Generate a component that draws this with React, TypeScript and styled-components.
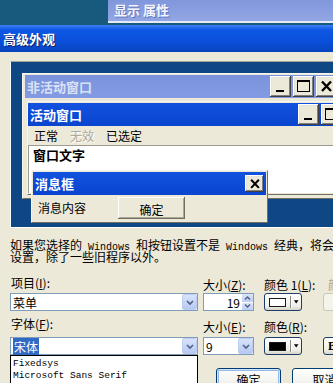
import styled, { createGlobalStyle } from "styled-components";

const CJK = `"Noto Sans CJK SC", "Noto Sans", sans-serif`;
const MONO = `"Liberation Mono", "DejaVu Sans Mono", monospace`;

const GlobalStyle = createGlobalStyle`
  * { box-sizing: border-box; }
  html, body { margin: 0; padding: 0; background: #ece9d8; }
`;

const Screen = styled.div`
  width: 333px;
  height: 383px;
  overflow: hidden;
  background: #ece9d8;
  display: flex;
  flex-direction: column;
  font-family: ${CJK};
  font-size: 12px;
  color: #000;
`;

/* ---------------- window chrome ---------------- */

const TopStrip = styled.div`
  height: 25px;
  flex: none;
  display: flex;
  background: #175a7d;
`;

const PropsTab = styled.div`
  margin-left: 108px;
  flex: 1;
  height: 23px;
  border-bottom: 2px solid #e4eaf8;
  background: linear-gradient(180deg, #8197dc, #93a6e4);
  color: #f4f6fd;
  font-weight: bold;
  font-size: 13px;
  line-height: 20px;
  padding-left: 6px;
  text-shadow: 1px 1px 0 #6276bb;
  white-space: nowrap;
`;

const TitleBar = styled.div`
  height: 27px;
  flex: none;
  background: linear-gradient(
    180deg,
    #3b7ff2 0%,
    #0d58e4 18%,
    #0a50da 60%,
    #0843bd 100%
  );
  color: #fff;
  font-weight: bold;
  font-size: 13px;
  line-height: 27px;
  padding-left: 3px;
  text-shadow: 1px 1px 0 #0a2070;
`;

const Body = styled.div`
  flex: 1;
  padding: 9px 0 0 10px;
  display: flex;
  flex-direction: column;
`;

/* ---------------- preview ---------------- */

const Preview = styled.div`
  position: relative;
  flex: none;
  width: 340px;
  height: 167px;
  background: #0e4784;
  border: 1px solid;
  border-color: #a3a39c #a3a39c #ffffff #ffffff;
  padding: 11px 0 0 11px;
  overflow: hidden;
`;

const Frame = styled.div<{ $w: number }>`
  width: ${(p) => p.$w}px;
  background: #ece9d8;
  border: 1px solid;
  border-color: #f6f5f0 #716f64 #716f64 #f6f5f0;
`;

const InactiveWin = styled(Frame)`
  padding: 1px 2px 3px 2px;
`;

const ActiveWin = styled(Frame)`
  margin: 3px 0 0 2px;
  padding: 1px 0;
`;

const Caption = styled.div<{ $active?: boolean }>`
  height: 23px;
  display: flex;
  align-items: center;
  padding: 0 2px 0 2px;
  background: ${(p) =>
    p.$active
      ? "linear-gradient(180deg, #1252de, #0a44cf)"
      : "linear-gradient(180deg, #7a93dc, #829be2)"};
  color: ${(p) => (p.$active ? "#ffffff" : "#d9e1f6")};
  font-weight: bold;
  font-size: 13px;
  white-space: nowrap;
`;

const CaptionText = styled.span`
  flex: 1;
`;

const CaptionButtons = styled.div`
  display: flex;
  gap: 2px;
`;

const CapBtn = styled.div<{ $w?: number; $h?: number }>`
  width: ${(p) => p.$w ?? 21}px;
  height: ${(p) => p.$h ?? 21}px;
  flex: none;
  background: #ece9d8;
  box-shadow: inset -1px -1px #404040, inset 1px 1px #ffffff,
    inset -2px -2px #808080, inset 2px 2px #e6e4da;
  display: flex;
  align-items: center;
  justify-content: center;
`;

const MinIcon = () => (
  <svg width="21" height="21" viewBox="0 0 21 21">
    <rect x="6" y="14" width="8" height="2" fill="#000" />
  </svg>
);

const MaxIcon = () => (
  <svg width="21" height="21" viewBox="0 0 21 21">
    <rect x="4.5" y="4.5" width="12" height="11" fill="none" stroke="#000" />
    <rect x="4" y="4" width="13" height="2" fill="#000" />
  </svg>
);

const CloseIcon = ({ size = 21 }: { size?: number }) => (
  <svg width={size} height={size} viewBox="0 0 21 21">
    <path d="M6 5.5 L15 15 M15 5.5 L6 15" stroke="#000" strokeWidth="2.4" />
  </svg>
);

const MenuRow = styled.div`
  height: 19px;
  display: flex;
  align-items: center;
  gap: 12px;
  padding-left: 6px;
  font-size: 12px;
`;

const MenuItem = styled.span<{ $disabled?: boolean }>`
  color: ${(p) => (p.$disabled ? "#aca899" : "#000")};
  text-shadow: ${(p) => (p.$disabled ? "1px 1px 0 #ffffff" : "none")};
`;

const WindowText = styled.div`
  height: 48px;
  background: #fff;
  border-left: 1px solid #9d9b90;
  border-top: 1px solid #9d9b90;
  padding: 0 4px;
  font-weight: bold;
  font-size: 13px;
  line-height: 17px;
`;

const MessageBox = styled.div`
  position: absolute;
  left: 20px;
  top: 108px;
  width: 237px;
  height: 53px;
  background: #ece9d8;
  border: 1px solid;
  border-color: #f6f5f0 #716f64 #716f64 #f6f5f0;
  padding: 1px;
  display: flex;
  flex-direction: column;
`;

const MessageBody = styled.div`
  flex: 1;
  display: flex;
  align-items: flex-start;
  padding: 2px 0 0 5px;
  font-size: 12px;
`;

const MessageText = styled.span`
  margin-top: 2px;
`;

const ClassicButton = styled.div`
  margin-left: 32px;
  width: 67px;
  height: 22px;
  display: flex;
  align-items: center;
  justify-content: center;
  background: #ece9d8;
  box-shadow: inset -1px -1px #716f64, inset 1px 1px #ffffff,
    inset -2px -2px #aca899;
  padding-top: 2px;
`;

/* ---------------- settings ---------------- */

const Desc = styled.div`
  margin-top: 11px;
  font-size: 12px;
  line-height: 12px;
  white-space: nowrap;
`;

const DescLine = styled.div`
  height: 12px;
`;

const Latin = styled.span`
  font-family: ${MONO};
  font-size: 10px;
  line-height: 10px;
  white-space: pre;
`;

const Settings = styled.div`
  margin-top: 12px;
  display: grid;
  grid-template-columns: 193px 61px 59px 40px;
  grid-template-rows: 18px 18px 26px 18px auto;
  font-size: 12px;
`;

const Label = styled.div<{ $lead?: boolean; $muted?: boolean }>`
  align-self: ${(p) => (p.$lead ? "start" : "end")};
  padding-left: ${(p) => (p.$lead ? 1 : 0)}px;
  margin-top: ${(p) => (p.$lead ? 1 : 0)}px;
  margin-bottom: ${(p) => (p.$lead ? 0 : 1)}px;
  line-height: 14px;
  white-space: nowrap;
  color: ${(p) => (p.$muted ? "#aca899" : "#000")};
`;

const LowLabel = styled(Label)`
  margin-top: ${(p) => (p.$lead ? 6 : 0)}px;
  margin-bottom: ${(p) => (p.$lead ? 0 : 3)}px;
`;

const Field = styled.div<{ $w: number }>`
  width: ${(p) => p.$w}px;
  height: 18px;
  background: #fff;
  border: 1px solid #7f9db9;
  display: flex;
  align-items: center;
  padding-left: 2px;
  white-space: nowrap;
`;

const FieldText = styled.span<{ $right?: boolean }>`
  flex: 1;
  text-align: ${(p) => (p.$right ? "right" : "left")};
  padding-right: ${(p) => (p.$right ? 2 : 0)}px;
`;

const Selected = styled.span`
  background: #316ac5;
  color: #fff;
  padding: 0 1px;
`;

const DropButton = styled.div`
  flex: none;
  width: 15px;
  height: 16px;
  background: linear-gradient(180deg, #d9e3fb, #b7c9f2);
  border: 1px solid #bccdf3;
  border-radius: 2px;
  display: flex;
  align-items: center;
  justify-content: center;
`;

const Chevron = () => (
  <svg width="8" height="5" viewBox="0 0 8 5">
    <path d="M1 1 L4 4 L7 1" fill="none" stroke="#4d6185" strokeWidth="1.7" />
  </svg>
);

const SpinButtons = styled.div`
  flex: none;
  width: 11px;
  height: 16px;
  display: flex;
  flex-direction: column;
  gap: 1px;
`;

const SpinHalf = styled.div`
  flex: 1;
  background: linear-gradient(180deg, #dbe4fb, #bccdf3);
  border-radius: 1px;
  display: flex;
  align-items: center;
  justify-content: center;
`;

const SpinArrow = ({ up }: { up?: boolean }) => (
  <svg width="7" height="4" viewBox="0 0 7 4">
    <path
      d={up ? "M1 3.5 L3.5 1 L6 3.5" : "M1 0.5 L3.5 3 L6 0.5"}
      fill="none"
      stroke="#4d6185"
      strokeWidth="1.4"
    />
  </svg>
);

const PickButton = styled.div<{ $disabled?: boolean; $w?: number }>`
  width: ${(p) => p.$w ?? 38}px;
  height: 18px;
  border: 1px solid ${(p) => (p.$disabled ? "#c9c7ba" : "#1c3d6a")};
  border-radius: 3px;
  background: ${(p) =>
    p.$disabled
      ? "#f5f4ea"
      : "linear-gradient(180deg, #ffffff, #efeee8 75%, #d8d3c8)"};
  display: flex;
  align-items: center;
  padding: 0 2px 0 4px;
  gap: 2px;
`;

const Swatch = styled.div<{ $color: string }>`
  width: 18px;
  height: 9px;
  background: ${(p) => p.$color};
  border: 1px solid #1a1a1a;
`;

const Divider = styled.div`
  width: 1px;
  height: 12px;
  margin-left: 2px;
  background: #8a8a86;
  box-shadow: 1px 0 #fff;
`;

const Caret = () => (
  <svg width="7" height="4" viewBox="0 0 7 4">
    <path d="M1 0 L6 0 L3.5 3.5 Z" fill="#000" />
  </svg>
);

const BoldGlyph = styled.span`
  font-family: "Liberation Serif", serif;
  font-weight: bold;
  font-size: 12px;
`;

const FontList = styled.div`
  width: 188px;
  height: 40px;
  background: #fff;
  border: 1px solid #000;
  padding: 2px 2px;
  font-family: ${MONO};
  font-size: 9.5px;
  line-height: 12px;
  white-space: nowrap;
`;

const DialogButtons = styled.div`
  grid-column: 2 / span 3;
  display: flex;
  gap: 11px;
  padding: 13px 0 0 13px;
`;

const DialogButton = styled.div<{ $default?: boolean }>`
  flex: none;
  width: 65px;
  height: 23px;
  border: 1px solid #003c74;
  border-radius: 3px;
  background: linear-gradient(180deg, #ffffff 0%, #f3f3ef 60%, #d9d4c9 100%);
  box-shadow: ${(p) =>
    p.$default ? "inset 0 0 0 1px #cee7ff, inset 0 0 0 2px #98b8ea" : "none"};
  display: flex;
  align-items: center;
  justify-content: center;
  font-size: 12px;
`;

export default function App() {
  return (
    <>
      <GlobalStyle />
      <Screen>
        <TopStrip>
          <PropsTab>显示 属性</PropsTab>
        </TopStrip>
        <TitleBar>高级外观</TitleBar>
        <Body>
          <Preview>
            <InactiveWin $w={320}>
              <Caption>
                <CaptionText>非活动窗口</CaptionText>
                <CaptionButtons>
                  <CapBtn>
                    <MinIcon />
                  </CapBtn>
                  <CapBtn>
                    <MaxIcon />
                  </CapBtn>
                  <CapBtn>
                    <CloseIcon />
                  </CapBtn>
                </CaptionButtons>
              </Caption>
              <ActiveWin $w={341}>
                <Caption $active>
                  <CaptionText>活动窗口</CaptionText>
                  <CaptionButtons>
                    <CapBtn>
                      <MinIcon />
                    </CapBtn>
                    <CapBtn>
                      <MaxIcon />
                    </CapBtn>
                    <CapBtn>
                      <CloseIcon />
                    </CapBtn>
                  </CaptionButtons>
                </Caption>
                <MenuRow>
                  <MenuItem>正常</MenuItem>
                  <MenuItem $disabled>无效</MenuItem>
                  <MenuItem>已选定</MenuItem>
                </MenuRow>
                <WindowText>窗口文字</WindowText>
              </ActiveWin>
            </InactiveWin>
            <MessageBox>
              <Caption $active>
                <CaptionText>消息框</CaptionText>
                <CapBtn $w={19} $h={17}>
                  <CloseIcon size={18} />
                </CapBtn>
              </Caption>
              <MessageBody>
                <MessageText>消息内容</MessageText>
                <ClassicButton>确定</ClassicButton>
              </MessageBody>
            </MessageBox>
          </Preview>

          <Desc>
            <DescLine>
              如果您选择的<Latin> Windows </Latin>和按钮设置不是
              <Latin> Windows </Latin>经典，将会改写下列
            </DescLine>
            <DescLine>设置，除了一些旧程序以外。</DescLine>
          </Desc>

          <Settings>
            <Label $lead>
              项目(<u>I</u>):
            </Label>
            <Label>
              大小(<u>Z</u>):
            </Label>
            <Label>
              颜色 1(<u>L</u>):
            </Label>
            <Label $muted style={{ paddingLeft: 5 }}>
              颜色 2(2):
            </Label>

            <Field $w={188}>
              <FieldText>菜单</FieldText>
              <DropButton>
                <Chevron />
              </DropButton>
            </Field>
            <Field $w={51}>
              <FieldText $right>19</FieldText>
              <SpinButtons>
                <SpinHalf>
                  <SpinArrow up />
                </SpinHalf>
                <SpinHalf>
                  <SpinArrow />
                </SpinHalf>
              </SpinButtons>
            </Field>
            <PickButton>
              <Swatch $color="#ffffff" />
              <Divider />
              <Caret />
            </PickButton>
            <PickButton $disabled $w={40} />

            <LowLabel $lead>
              字体(<u>F</u>):
            </LowLabel>
            <LowLabel>
              大小(<u>E</u>):
            </LowLabel>
            <LowLabel>
              颜色(<u>R</u>):
            </LowLabel>
            <div />

            <Field $w={188}>
              <FieldText>
                <Selected>宋体</Selected>
              </FieldText>
              <DropButton>
                <Chevron />
              </DropButton>
            </Field>
            <Field $w={51}>
              <FieldText>9</FieldText>
              <DropButton>
                <Chevron />
              </DropButton>
            </Field>
            <PickButton>
              <Swatch $color="#000000" />
              <Divider />
              <Caret />
            </PickButton>
            <PickButton $w={22}>
              <BoldGlyph>B</BoldGlyph>
            </PickButton>

            <FontList>
              <div>Fixedsys</div>
              <div>Microsoft Sans Serif</div>
              <div>System</div>
            </FontList>
            <DialogButtons>
              <DialogButton $default>确定</DialogButton>
              <DialogButton>取消</DialogButton>
            </DialogButtons>
          </Settings>
        </Body>
      </Screen>
    </>
  );
}
